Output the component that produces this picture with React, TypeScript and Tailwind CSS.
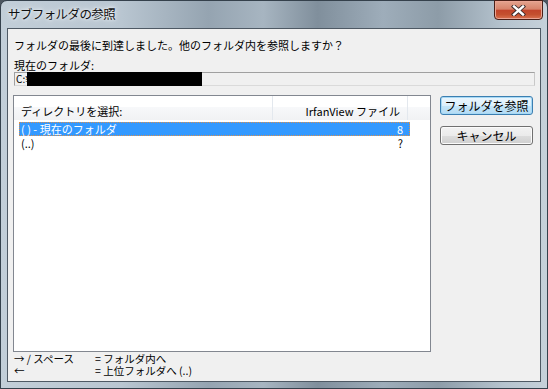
import React from "react";

const jp = "font-['MS_UI_Gothic','Noto_Sans_CJK_JP',sans-serif]";

const CloseGlyph = () => (
  <svg width="15" height="11" viewBox="0 0 15 11">
    <path d="M3 1.5 L12 9.5 M12 1.5 L3 9.5" stroke="#3a2a2a" strokeWidth="4.2" strokeLinecap="square" />
    <path d="M3 1.5 L12 9.5 M12 1.5 L3 9.5" stroke="#ffffff" strokeWidth="2.4" strokeLinecap="square" />
  </svg>
);

const Button = ({ label, primary }: { label: string; primary?: boolean }) => (
  <div
    className={
      "w-[93px] h-[19px] rounded-[3px] border flex items-center justify-center text-[12px] leading-none text-black " +
      (primary
        ? "border-[#3c7fb1] bg-[linear-gradient(#ecf6fd_0%,#dcf0fc_50%,#c4e5f8_51%,#b4dbf4_100%)] shadow-[inset_0_0_0_1px_#a7d9f5]"
        : "border-[#707070] bg-[linear-gradient(#f2f2f2_0%,#ebebeb_50%,#dddddd_51%,#cfcfcf_100%)] shadow-[inset_0_0_0_1px_#fbfbfb]")
    }
  >
    {label}
  </div>
);

export default function App() {
  return (
    <div className={"w-[548px] h-[389px] bg-[#4c5660] " + jp}>
      <div className="w-full h-full rounded-t-[7px] border border-[#35414c] flex flex-col bg-[linear-gradient(90deg,#c2ced8_0%,#b9c6d1_22%,#95a4b1_38%,#a7b5c1_48%,#808f9c_58%,#9eadba_70%,#8d9ca8_80%,#b5c3ce_92%,#c6d1da_100%)]">
        {/* title bar */}
        <div className="h-[27px] flex justify-between items-start pl-[7px] pr-[4px]">
          <span className="mt-[6px] text-[12.5px] leading-[14px] tracking-[-0.6px] text-[#111] [text-shadow:0_0_6px_#f4f7fa,0_0_3px_#f4f7fa]">
            サブフォルダの参照
          </span>
          <div className="-mt-px w-[49px] h-[20px] rounded-b-[4px] border border-[#4a1f17] shadow-[inset_0_0_0_1px_#eaa594] bg-[linear-gradient(#e4a48f_0%,#d7836b_45%,#c2452b_52%,#c4502f_75%,#d97352_100%)] flex items-center justify-center">
            <CloseGlyph />
          </div>
        </div>

        {/* client */}
        <div className="mx-[6px] mb-[6px] flex-1 border border-[#4e5964] bg-[#f0f0f0] flex flex-col text-[11px] text-black">
          <p className="mt-[9px] ml-[6px] h-[14px] leading-[14px]">
            フォルダの最後に到達しました。他のフォルダ内を参照しますか？
          </p>
          <p className="mt-[6px] ml-[6px] h-[14px] leading-[14px]">現在のフォルダ:</p>
          <div className="ml-[6px] w-[521px] h-[14px] border border-[#a0a0a0] border-b-[#dadada] border-r-[#c8c8c8] flex items-center">
            <span className="ml-[1px] whitespace-nowrap leading-[12px] text-[10px]">C:¥</span>
            <div className="relative -ml-[4px] w-[175px] h-[14px] -my-px bg-black" />
          </div>

          <div className="mt-[9px] flex items-start">
            {/* list view */}
            <div className="ml-[5px] w-[418px] h-[257px] border border-[#828790] bg-white flex flex-col">
              <div className="h-[24px] flex bg-[linear-gradient(#ffffff_0%,#ffffff_45%,#f7f8fa_46%,#f1f2f4_100%)]">
                <div className="w-[259px] border-r border-[#e3e8ee] flex items-end pb-[3px] pl-[7px] leading-[12px]">
                  ディレクトリを選択:
                </div>
                <div className="w-[135px] border-r border-[#e3e8ee] flex items-end justify-end pb-[3px] pr-[7px] leading-[12px]">
                  IrfanView ファイル
                </div>
                <div className="flex-1" />
              </div>
              <div className="pt-[2px] pl-[5px]">
                <div className="w-[391px] h-[14px] bg-[#3399ff] border border-dotted border-[#d9904e] text-white flex items-center justify-between pl-[1px] pr-[6px] leading-[12px]">
                  <span>( ) - 現在のフォルダ</span>
                  <span>8</span>
                </div>
                <div className="w-[391px] h-[14px] flex items-center justify-between pl-[2px] pr-[7px] leading-[12px]">
                  <span>(..)</span>
                  <span>?</span>
                </div>
              </div>
            </div>

            {/* buttons */}
            <div className="ml-[9px] mt-[1px] flex flex-col gap-[11px]">
              <Button label="フォルダを参照" primary />
              <Button label="キャンセル" />
            </div>
          </div>

          <div className="mt-[1px] ml-[6px] grid grid-cols-[81px_1fr] text-[10.5px] leading-[12px]">
            <span>→ / スペース</span>
            <span>= フォルダ内へ</span>
            <span>←</span>
            <span>= 上位フォルダへ (..)</span>
          </div>
        </div>
      </div>
    </div>
  );
}
